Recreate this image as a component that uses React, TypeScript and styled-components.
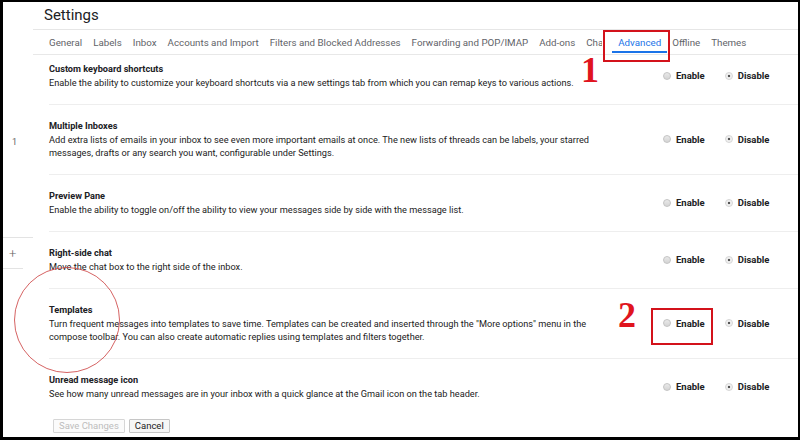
import React from "react";
import styled, { createGlobalStyle } from "styled-components";

const GlobalStyle = createGlobalStyle`
  html, body {
    margin: 0;
    padding: 0;
    background: #fff;
  }
  body {
    font-family: Roboto, "Liberation Sans", Arial, sans-serif;
  }
`;

const Frame = styled.div`
  position: relative;
  box-sizing: border-box;
  width: 800px;
  height: 440px;
  border-style: solid;
  border-color: #000;
  border-width: 2px 2px 3px 3px;
  background: #fff;
  display: flex;
  overflow: hidden;
  color: #202124;
`;

const Sidebar = styled.aside`
  width: 30px;
  flex-shrink: 0;
  display: flex;
  flex-direction: column;
  padding-top: 134px;
`;

const SideCount = styled.div`
  font-size: 9px;
  line-height: 12px;
  color: #666;
  padding-left: 9px;
`;

const SidePlus = styled.div`
  font-size: 13px;
  font-weight: 300;
  line-height: 16px;
  color: #666;
  padding-left: 6px;
  margin-top: 8px;
`;

const SideDivider = styled.div<{ $width: number; $gap: number }>`
  height: 1px;
  width: ${(p) => p.$width}px;
  background: #e3e3e3;
  margin-top: ${(p) => p.$gap}px;
`;

const Main = styled.main`
  flex: 1;
  min-width: 0;
  display: flex;
  flex-direction: column;
`;

const Header = styled.header`
  height: 27px;
  display: flex;
  align-items: center;
  padding-left: 11px;
  border-bottom: 1px solid #e6e6e6;
`;

const Title = styled.h1`
  margin: 0 0 2px;
  font-size: 15px;
  font-weight: 400;
  color: #202124;
`;

const TabBar = styled.nav`
  height: 24px;
  display: flex;
  align-items: stretch;
  gap: 11px;
  padding-left: 16px;
  border-bottom: 1px solid #e8e8e8;
  white-space: nowrap;
`;

const Tab = styled.div<{ $active?: boolean; $clip?: number }>`
  position: relative;
  display: flex;
  align-items: center;
  font-size: 9.75px;
  color: ${(p) => (p.$active ? "#1a73e8" : "#5f6368")};
  ${(p) =>
    p.$clip ? `width: ${p.$clip}px; overflow: hidden; margin-right: 5px;` : ""}

  &::after {
    content: "";
    display: ${(p) => (p.$active ? "block" : "none")};
    position: absolute;
    left: -6px;
    right: -6px;
    bottom: 1px;
    height: 2px;
    background: #1a73e8;
  }
`;

const List = styled.section`
  padding-left: 16px;
  display: flex;
  flex-direction: column;
`;

const Row = styled.div<{ $first?: boolean }>`
  display: grid;
  grid-template-columns: minmax(0, 1fr) 107px;
  align-items: center;
  padding: ${(p) => (p.$first ? "7px" : "14.5px")} 28px 14.5px 0;
  border-top: ${(p) => (p.$first ? "none" : "1px solid #eeeeee")};
`;

const RowText = styled.div`
  max-width: 550px;
`;

const RowTitle = styled.div`
  font-size: 9.2px;
  line-height: 14px;
  font-weight: 700;
  color: #202124;
`;

const RowDesc = styled.div`
  font-size: 9.2px;
  line-height: 13px;
  color: #222;
`;

const RadioGroup = styled.div`
  display: flex;
  align-items: center;
  gap: 20px;
`;

const RadioOption = styled.label`
  display: flex;
  align-items: center;
  gap: 5px;
  font-size: 9.5px;
  font-weight: 700;
  color: #202124;
`;

const RadioDot = styled.span<{ $checked?: boolean }>`
  box-sizing: border-box;
  width: 8px;
  height: 8px;
  border-radius: 50%;
  border: 1px solid ${(p) => (p.$checked ? "#d6d6d6" : "#c4c4c4")};
  background: ${(p) =>
    p.$checked
      ? "radial-gradient(circle, #555 0 1.3px, #f1f1f1 1.6px)"
      : "linear-gradient(#e9e9e9, #d4d4d4)"};
`;

const Footer = styled.div`
  display: flex;
  gap: 4px;
  margin: 4px 0 0 4px;
`;

const Button = styled.button<{ $disabled?: boolean }>`
  box-sizing: border-box;
  height: 14px;
  padding: 0 5px;
  font-family: Roboto, "Liberation Sans", Arial, sans-serif;
  font-size: 9.5px;
  line-height: 12px;
  color: ${(p) => (p.$disabled ? "#bdbdbd" : "#222")};
  background: ${(p) => (p.$disabled ? "#fbfbfb" : "#f6f6f6")};
  border: 1px solid ${(p) => (p.$disabled ? "#d6d6d6" : "#c6c6c6")};
  border-radius: 1px;
`;

/* annotation overlays drawn on top of the screenshot */
const MarkBox = styled.div<{ $x: number; $y: number; $w: number; $h: number }>`
  position: absolute;
  box-sizing: border-box;
  left: ${(p) => p.$x}px;
  top: ${(p) => p.$y}px;
  width: ${(p) => p.$w}px;
  height: ${(p) => p.$h}px;
  border: 2px solid #d3121b;
  pointer-events: none;
`;

const MarkNumber = styled.div<{ $x: number; $y: number }>`
  position: absolute;
  left: ${(p) => p.$x}px;
  top: ${(p) => p.$y}px;
  font-family: "Liberation Serif", "Times New Roman", serif;
  font-weight: 700;
  font-size: 36px;
  line-height: 36px;
  color: #e0141e;
`;

const MarkCircle = styled.div`
  position: absolute;
  left: 11px;
  top: 265px;
  width: 106px;
  height: 106px;
  box-sizing: border-box;
  border-radius: 50%;
  border: 1.8px solid rgba(206, 72, 72, 0.85);
  pointer-events: none;
`;

type Setting = {
  title: string;
  desc: string;
};

const settings: Setting[] = [
  {
    title: "Custom keyboard shortcuts",
    desc: "Enable the ability to customize your keyboard shortcuts via a new settings tab from which you can remap keys to various actions.",
  },
  {
    title: "Multiple Inboxes",
    desc: "Add extra lists of emails in your inbox to see even more important emails at once. The new lists of threads can be labels, your starred messages, drafts or any search you want, configurable under Settings.",
  },
  {
    title: "Preview Pane",
    desc: "Enable the ability to toggle on/off the ability to view your messages side by side with the message list.",
  },
  {
    title: "Right-side chat",
    desc: "Move the chat box to the right side of the inbox.",
  },
  {
    title: "Templates",
    desc: 'Turn frequent messages into templates to save time. Templates can be created and inserted through the "More options" menu in the compose toolbar. You can also create automatic replies using templates and filters together.',
  },
  {
    title: "Unread message icon",
    desc: "See how many unread messages are in your inbox with a quick glance at the Gmail icon on the tab header.",
  },
];

const tabs = [
  "General",
  "Labels",
  "Inbox",
  "Accounts and Import",
  "Filters and Blocked Addresses",
  "Forwarding and POP/IMAP",
  "Add-ons",
];

const App: React.FC = () => {
  return (
    <>
      <GlobalStyle />
      <Frame>
        <Sidebar>
          <SideCount>1</SideCount>
          <SideDivider $width={30} $gap={89} />
          <SidePlus>+</SidePlus>
          <SideDivider $width={20} $gap={6} />
        </Sidebar>

        <Main>
          <Header>
            <Title>Settings</Title>
          </Header>

          <TabBar>
            {tabs.map((t) => (
              <Tab key={t}>{t}</Tab>
            ))}
            <Tab $clip={16}>Chat</Tab>
            <Tab $active>Advanced</Tab>
            <Tab>Offline</Tab>
            <Tab>Themes</Tab>
          </TabBar>

          <List>
            {settings.map((s, i) => (
              <Row key={s.title} $first={i === 0}>
                <RowText>
                  <RowTitle>{s.title}</RowTitle>
                  <RowDesc>{s.desc}</RowDesc>
                </RowText>
                <RadioGroup>
                  <RadioOption>
                    <RadioDot />
                    Enable
                  </RadioOption>
                  <RadioOption>
                    <RadioDot $checked />
                    Disable
                  </RadioOption>
                </RadioGroup>
              </Row>
            ))}
            <Footer>
              <Button $disabled>Save Changes</Button>
              <Button>Cancel</Button>
            </Footer>
          </List>
        </Main>

        <MarkBox $x={600} $y={28} $w={67} $h={32} />
        <MarkNumber $x={578} $y={50}>1</MarkNumber>
        <MarkBox $x={648} $y={306} $w={62} $h={37} />
        <MarkNumber $x={615} $y={295}>2</MarkNumber>
        <MarkCircle />
      </Frame>
    </>
  );
};

export default App;
